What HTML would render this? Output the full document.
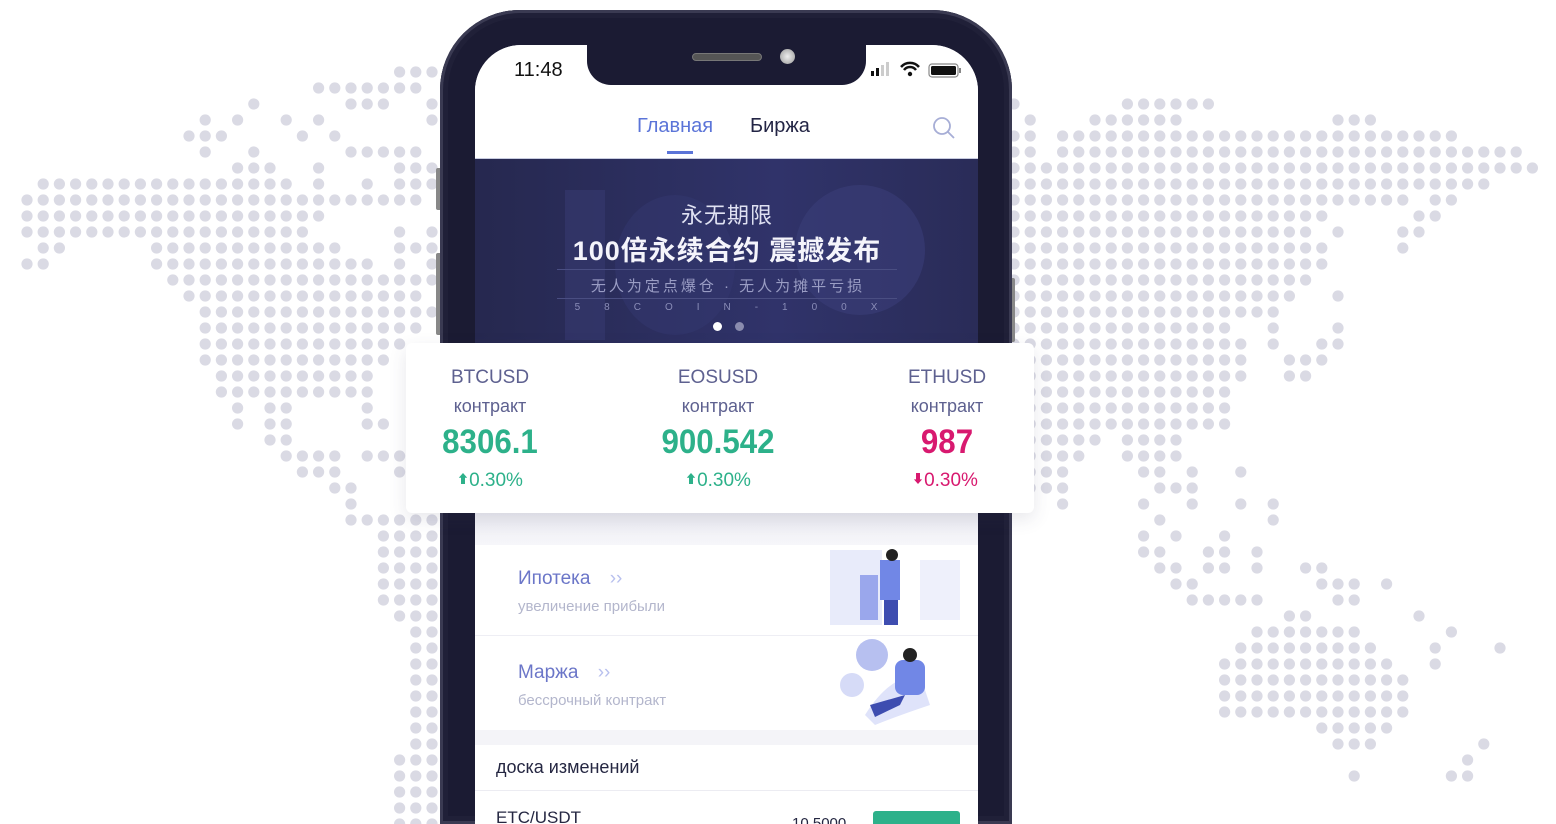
<!DOCTYPE html>
<html style="width:1556px;height:824px;overflow:hidden"><head><meta charset="utf-8">
<style>
*{margin:0;padding:0;box-sizing:border-box}
body{width:1556px;height:824px;overflow:hidden;background:#fff;position:relative;font-family:"Liberation Sans","Noto Sans CJK SC",sans-serif}
#map{position:absolute;left:0;top:0}
.abs{position:absolute}
.phone{left:440px;top:10px;width:572px;height:814px;border-radius:80px 80px 0 0;background:#1b1b33;box-shadow:inset 0 0 0 3px #3a3a52,inset 0 0 0 8px #202038}
.screen{left:475px;top:45px;width:503px;height:779px;border-radius:46px 46px 0 0;background:#f4f4f8;overflow:hidden}
.notch{left:587px;top:40px;width:279px;height:45px;background:#1b1b33;border-radius:0 0 24px 24px}
.t{position:absolute;white-space:nowrap}
.c{transform:translateX(-50%);text-align:center}
.card{left:406px;top:343px;width:628px;height:170px;background:#fff;border-radius:6px;box-shadow:0 6px 18px rgba(60,60,90,.12)}
.sym{font-size:19px;color:#5e6190}
.kon{font-size:18px;color:#5e6190}
.pr{font-weight:bold;font-size:34px;transform:translateX(-50%) scaleX(.92)}
.ch{font-size:19px}
.ar{font-size:12px;vertical-align:3px}
.g{color:#2db18a}.r{color:#d8196f}
</style></head><body>
<svg id="map" width="1556" height="824"></svg>
<div class="abs" style="left:436px;top:168px;width:6px;height:42px;background:#888;border-radius:2px"></div>
<div class="abs" style="left:436px;top:253px;width:6px;height:82px;background:#888;border-radius:2px"></div>
<div class="abs" style="left:1010px;top:278px;width:5px;height:64px;background:#888;border-radius:2px"></div>
<div class="abs phone"></div>
<div class="abs screen">
  <div class="abs" style="left:0;top:0;width:503px;height:113px;background:#fff"></div>
  <div class="abs" style="left:0;top:113px;width:503px;height:1px;background:#c8cce0"></div>
  <div class="abs" style="left:0;top:114px;width:503px;height:184px;background:linear-gradient(90deg,#26284f,#30336a 60%,#2a2c58)"></div>
  <div class="abs" style="left:320px;top:140px;width:130px;height:130px;border-radius:50%;background:#3a3e78;opacity:.6"></div>
  <div class="abs" style="left:90px;top:145px;width:40px;height:150px;background:#34376c;opacity:.7"></div>
  <div class="abs" style="left:140px;top:150px;width:120px;height:140px;border-radius:50%;background:#343770;opacity:.5"></div>
  <div class="abs" style="left:0;top:468px;width:503px;height:32px;background:linear-gradient(#ececf2,#f6f6fa)"></div>
  <div class="abs" style="left:0;top:500px;width:503px;height:185px;background:#fff"></div>
  <div class="abs" style="left:0;top:590px;width:503px;height:1px;background:#eeeef4"></div>
  <div class="abs" style="left:0;top:700px;width:503px;height:100px;background:#fff"></div>
  <div class="abs" style="left:0;top:745px;width:503px;height:1px;background:#ececf2"></div>
</div>
<div class="abs notch"></div>
<div class="abs" style="left:692px;top:53px;width:70px;height:8px;border-radius:4px;background:#555;border:1px solid #777"></div>
<div class="abs" style="left:780px;top:49px;width:15px;height:15px;border-radius:50%;background:radial-gradient(#eee,#999)"></div>
<div class="t" style="left:514px;top:59px;font-size:20px;color:#111">11:48</div>
<svg class="abs" style="left:870px;top:60px" width="95" height="20">
 <rect x="1" y="11" width="3" height="5" fill="#111"/><rect x="6" y="8" width="3" height="8" fill="#111"/><rect x="11" y="5" width="3" height="11" fill="#ccc"/><rect x="16" y="2" width="3" height="14" fill="#ccc"/>
 <path d="M31 7 a12 12 0 0 1 18 0 M34 10 a7.5 7.5 0 0 1 12 0" stroke="#111" stroke-width="2.5" fill="none"/><circle cx="40" cy="14" r="2.2" fill="#111"/>
 <rect x="59" y="4" width="29" height="13" rx="3" fill="none" stroke="#888" stroke-width="1.2"/><rect x="61" y="6" width="25" height="9" rx="1.5" fill="#111"/><rect x="89" y="8" width="2" height="5" fill="#888"/>
</svg>
<div class="t" style="left:637px;top:115px;font-size:20px;color:#5b74d8">Главная</div>
<div class="t" style="left:750px;top:115px;font-size:20px;color:#232545">Биржа</div>
<div class="abs" style="left:667px;top:151px;width:26px;height:3px;background:#5b74d8"></div>
<svg class="abs" style="left:932px;top:116px" width="24" height="24"><circle cx="10" cy="10" r="8" stroke="#a7aed6" stroke-width="1.8" fill="none"/><path d="M16 16 L22 22" stroke="#a7aed6" stroke-width="1.8"/></svg>
<div class="t c" style="left:727px;top:198px;font-size:22px;color:#dfe1f2;letter-spacing:1px">永无期限</div>
<div class="t c" style="left:727px;top:229px;font-size:27px;font-weight:bold;color:#f4f4fb;letter-spacing:1px">100倍永续合约 震撼发布</div>
<div class="abs" style="left:557px;top:269px;width:340px;height:1px;background:#4a4e82"></div>
<div class="t c" style="left:728px;top:275px;font-size:15px;color:#9a9dc4;letter-spacing:3px">无人为定点爆仓 · 无人为摊平亏损</div>
<div class="abs" style="left:557px;top:298px;width:340px;height:1px;background:#4a4e82"></div>
<div class="t c" style="left:726px;top:302px;font-size:10px;color:#8a8db8;letter-spacing:24px;padding-left:24px">58COIN-100X</div>
<div class="abs" style="left:713px;top:322px;width:9px;height:9px;border-radius:50%;background:#fff"></div>
<div class="abs" style="left:735px;top:322px;width:9px;height:9px;border-radius:50%;background:#8a8cae"></div>
<div class="abs card"></div>
<div class="t c sym" style="left:490px;top:367px">BTCUSD</div>
<div class="t c kon" style="left:490px;top:396px">контракт</div>
<div class="t pr g" style="left:490px;top:423px">8306.1</div>
<div class="t c ch g" style="left:490px;top:470px"><span class="ar">⬆</span>0.30%</div>
<div class="t c sym" style="left:718px;top:367px">EOSUSD</div>
<div class="t c kon" style="left:718px;top:396px">контракт</div>
<div class="t pr g" style="left:718px;top:423px">900.542</div>
<div class="t c ch g" style="left:718px;top:470px"><span class="ar">⬆</span>0.30%</div>
<div class="t c sym" style="left:947px;top:367px">ETHUSD</div>
<div class="t c kon" style="left:947px;top:396px">контракт</div>
<div class="t pr r" style="left:947px;top:423px">987</div>
<div class="t c ch r" style="left:945px;top:470px"><span class="ar">⬇</span>0.30%</div>
<div class="t" style="left:518px;top:568px;font-size:19px;color:#6b76c8">Ипотека <span style="color:#b8c0ee;margin-left:14px">››</span></div>
<div class="t" style="left:518px;top:598px;font-size:15px;color:#b3b6cc">увеличение прибыли</div>
<div class="t" style="left:518px;top:662px;font-size:19px;color:#6b76c8">Маржа <span style="color:#b8c0ee;margin-left:14px">››</span></div>
<div class="t" style="left:518px;top:692px;font-size:15px;color:#b3b6cc">бессрочный контракт</div>
<svg class="abs" style="left:780px;top:545px" width="190" height="185">
 <rect x="50" y="5" width="52" height="75" fill="#e8ebfa"/><rect x="140" y="15" width="40" height="60" fill="#eef0fb"/>
 <rect x="80" y="30" width="18" height="45" fill="#9aa7ec"/><rect x="100" y="15" width="20" height="40" fill="#7187e6"/>
 <circle cx="112" cy="10" r="6" fill="#222"/><rect x="104" y="55" width="14" height="25" fill="#3e4db0"/>
 <circle cx="92" cy="110" r="16" fill="#b7c0f0"/><circle cx="72" cy="140" r="12" fill="#d6dbf7"/>
 <path d="M85 170 Q110 130 140 130 L150 160 Q120 170 95 180 Z" fill="#dfe3fa"/>
 <rect x="115" y="115" width="30" height="35" rx="8" fill="#7187e6"/><circle cx="130" cy="110" r="7" fill="#222"/>
 <path d="M90 160 L125 150 L120 160 L95 172 Z" fill="#3e4db0"/>
</svg>
<div class="t" style="left:496px;top:757px;font-size:18px;color:#252742">доска изменений</div>
<div class="t" style="left:496px;top:808px;font-size:17px;color:#252742">ETC/USDT</div>
<div class="t" style="left:792px;top:815px;font-size:15px;color:#252742">10.5000</div>
<div class="abs" style="left:873px;top:811px;width:87px;height:13px;border-radius:3px 3px 0 0;background:#2db18a"></div>
<script>
var L=[[72,[[23,25]]],[88,[[18,24]]],[104,[[14,14],[20,22],[25,25]]],[120,[[11,11],[13,13],[16,16],[18,18],[25,25]]],[136,[[10,12],[17,17],[19,19]]],[152,[[11,11],[14,14],[20,24]]],[168,[[13,15],[18,18],[23,25]]],[184,[[1,16],[18,18],[21,21],[23,25]]],[200,[[0,24]]],[216,[[0,18]]],[232,[[0,17],[23,23],[25,25]]],[248,[[1,2],[8,19],[23,25]]],[264,[[0,1],[8,21],[23,23],[25,25]]],[280,[[9,25]]],[296,[[10,24]]],[312,[[11,25]]],[328,[[11,24]]],[344,[[11,23]]],[360,[[11,22]]],[376,[[12,21]]],[392,[[12,21]]],[408,[[13,13],[15,16],[21,21]]],[424,[[13,13],[15,16],[21,22]]],[440,[[15,16]]],[456,[[16,19],[21,25]]],[472,[[17,19],[23,23]]],[488,[[19,20]]],[504,[[20,20]]],[520,[[20,25]]],[536,[[22,25]]],[552,[[22,25]]],[568,[[22,25]]],[584,[[22,25]]],[600,[[22,25]]],[616,[[23,25]]],[632,[[24,25]]],[648,[[24,25]]],[664,[[24,25]]],[680,[[24,25]]],[696,[[24,25]]],[712,[[24,25]]],[728,[[24,25]]],[744,[[24,25]]],[760,[[23,25]]],[776,[[23,25]]],[792,[[23,25]]],[808,[[23,25]]],[824,[[23,25]]]];
var R=[[104,[[0,0],[7,12]]],[120,[[1,1],[5,10],[20,22]]],[136,[[0,1],[3,27]]],[152,[[0,1],[3,31]]],[168,[[0,32]]],[184,[[0,29]]],[200,[[0,24],[26,27]]],[216,[[0,19],[25,26]]],[232,[[0,18],[20,20],[24,25]]],[248,[[0,19],[24,24]]],[264,[[0,19]]],[280,[[0,18]]],[296,[[0,17],[20,20]]],[312,[[0,16]]],[328,[[0,13],[16,16],[20,20]]],[344,[[0,14],[16,16],[19,20]]],[360,[[0,14],[17,19]]],[376,[[0,14],[17,18]]],[392,[[0,13]]],[408,[[0,13]]],[424,[[0,13]]],[440,[[0,5],[7,10]]],[456,[[0,4],[7,10]]],[472,[[0,3],[8,9],[11,11],[14,14]]],[488,[[0,3],[9,11]]],[504,[[3,3],[8,8],[11,11],[14,14],[16,16]]],[520,[[9,9],[16,16]]],[536,[[8,8],[10,10],[13,13]]],[552,[[8,9],[12,13],[15,15]]],[568,[[9,10],[12,13],[15,15],[18,19]]],[584,[[10,11],[19,21],[23,23]]],[600,[[11,15],[20,21]]],[616,[[17,18],[25,25]]],[632,[[15,21],[27,27]]],[648,[[14,22],[26,26],[30,30]]],[664,[[13,23],[26,26]]],[680,[[13,24]]],[696,[[13,24]]],[712,[[13,24]]],[728,[[19,23]]],[744,[[20,22],[29,29]]],[760,[[28,28]]],[776,[[21,21],[27,28]]]];
var s='';
function add(rows,x0,p){rows.forEach(function(r){r[1].forEach(function(g){for(var c=g[0];c<=g[1];c++){s+='<circle cx="'+(x0+p*c).toFixed(1)+'" cy="'+r[0]+'" r="5.6"/>';}});});}
add(L,27,16.2);add(R,1014,16.2);
var m=document.getElementById('map');m.innerHTML='<g fill="#dadae4">'+s+'</g>';
</script>
</body></html>
